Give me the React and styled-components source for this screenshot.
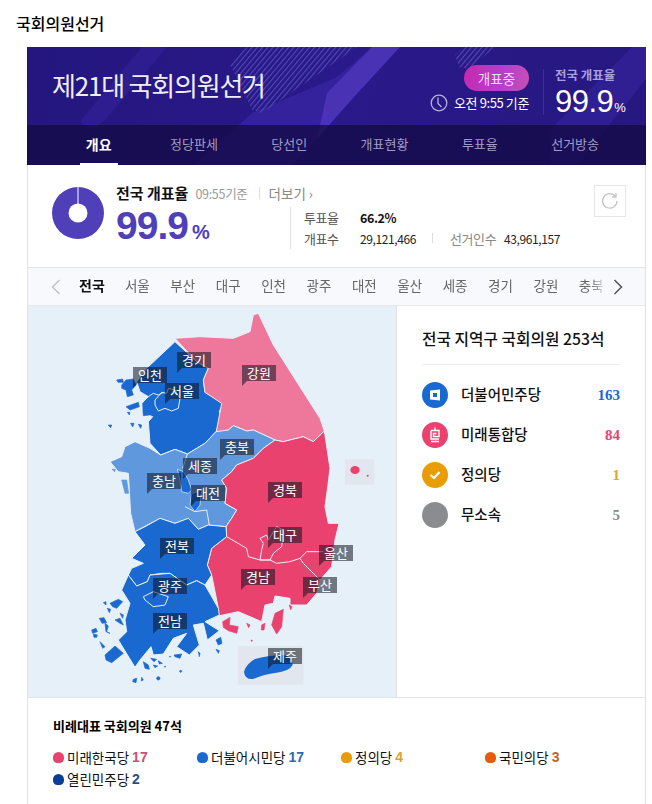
import React from "react";
import styled, { createGlobalStyle } from "styled-components";

const GlobalStyle = createGlobalStyle`
  * { box-sizing: border-box; }
  html, body { margin: 0; padding: 0; background: #fff; overflow: hidden; }
  body { font-family: "Noto Sans CJK KR", "Noto Sans", sans-serif; color: #111; }
`;

const NAV = ["개요", "정당판세", "당선인", "개표현황", "투표율", "선거방송"];
const CITIES = ["전국", "서울", "부산", "대구", "인천", "광주", "대전", "울산", "세종", "경기", "강원", "충북"];

const DISTRICT = [
  { name: "더불어민주당", seats: 163, color: "#1a69d0", mark: "square" },
  { name: "미래통합당", seats: 84, color: "#e9426f", mark: "glyph" },
  { name: "정의당", seats: 1, color: "#e89c05", mark: "check", count: "#e0a52e" },
  { name: "무소속", seats: 5, color: "#8b8c90" },
];

const PROPORTIONAL = [
  { name: "미래한국당", seats: 17, dot: "#e9426f", text: "#c9507a" },
  { name: "더불어시민당", seats: 17, dot: "#1a69d0", text: "#2a6cb0" },
  { name: "정의당", seats: 4, dot: "#e89c05", text: "#dfa02c" },
  { name: "국민의당", seats: 3, dot: "#e85a0a", text: "#c4622a" },
  { name: "열린민주당", seats: 2, dot: "#0a3f94", text: "#1f4f8f" },
];

const LABELS = [
  ["경기", 177, 352], ["인천", 133, 367], ["서울", 165, 383], ["강원", 242, 365],
  ["충북", 220, 439], ["세종", 183, 458], ["충남", 147, 473], ["대전", 191, 485],
  ["경북", 268, 482], ["대구", 268, 527], ["울산", 319, 545], ["부산", 303, 577],
  ["전북", 160, 538], ["경남", 241, 569], ["광주", 153, 578], ["전남", 153, 613],
  ["제주", 268, 648],
];

function PartyIcon({ mark }) {
  if (mark === "square") {
    return (
      <svg width="12" height="12" viewBox="0 0 12 12">
        <path d="M1 1.5 L11 0.5 V11.5 L1 10.5 Z" fill="#fff" />
        <rect x="4" y="4" width="4" height="4" fill="#1a69d0" />
      </svg>
    );
  }
  if (mark === "glyph") {
    return (
      <svg width="12" height="16" viewBox="0 0 12 16" fill="none" stroke="#fff" strokeWidth="1.4">
        <path d="M6 0.5 V3 M2 3.5 H10 V9.5 H4.5 V6.5 H7.5 M2 3.5 V12 H10 M2 14.5 H10" />
      </svg>
    );
  }
  if (mark === "check") {
    return (
      <svg width="14" height="12" viewBox="0 0 14 12" fill="none" stroke="#fff" strokeWidth="2.2">
        <path d="M2.5 6 L6 9 L11.5 3" />
      </svg>
    );
  }
  return null;
}

function Chevron({ dir, color }) {
  return (
    <svg width="10" height="16" viewBox="0 0 10 16" fill="none" stroke={color} strokeWidth="1.5">
      <path d={dir === "left" ? "M8.5 1 L1.5 8 L8.5 15" : "M1.5 1 L8.5 8 L1.5 15"} />
    </svg>
  );
}

function KoreaMap() {
  return (
    <MapSvg viewBox="-186 3 1104 1173">
      <g stroke="#e6f0f8" strokeWidth="3" strokeLinejoin="round">
        {/* 경기 */}
        <polygon fill="#1a69d0" points="255,110 320,170 355,190 340,225 345,262 400,292 388,320 393,340 378,380 345,415 292,447 255,433 212,450 180,415 175,350 188,335 158,325 160,290 175,275 150,260 140,230 170,190" />
        {/* 강원 */}
        <polygon fill="#ee789c" points="255,100 330,95 430,100 480,80 490,30 505,25 550,120 620,230 690,340 703,378 670,410 640,395 580,410 555,405 490,375 470,378 430,362 415,375 378,385 395,295 345,262 340,225 355,190 320,170" />
        {/* 충청 */}
        <polygon fill="#6098de" points="105,425 135,410 180,430 212,450 255,433 292,447 345,415 378,380 415,375 430,362 470,378 490,375 555,405 520,430 490,460 440,480 425,500 395,525 410,550 405,595 440,615 425,640 408,665 355,660 325,673 295,640 255,655 210,640 135,680 122,625 115,505 85,500 60,470 95,455" />
        {/* 경상 */}
        <polygon fill="#e9426f" points="555,405 580,410 640,395 670,410 703,378 720,490 712,555 705,605 715,655 747,655 735,705 725,785 690,825 680,865 650,900 600,900 600,880 555,873 550,895 525,900 515,950 445,920 385,933 385,910 365,810 352,780 365,730 410,695 408,665 425,640 440,615 405,595 410,550 395,525 425,500 440,480 490,460 520,430" />
        {/* 전북 */}
        <polygon fill="#1a69d0" points="135,680 165,665 210,640 255,655 295,640 325,673 355,660 408,665 410,695 365,730 352,780 365,810 345,840 320,827 290,840 240,805 215,805 180,810 172,830 140,843 115,810 125,790 160,775 125,760 165,720" />
        {/* 전남 */}
        <polygon fill="#1a69d0" points="115,810 140,843 172,830 180,810 240,805 290,840 320,827 345,840 385,910 388,930 345,950 388,977 352,1005 340,955 310,960 328,1020 298,1050 260,1025 290,985 250,1000 220,1047 190,1050 183,1025 150,1065 135,1087 85,1005 110,980 105,945 120,895 95,855" />
      </g>
      {/* 세종, 대전 */}
      <g fill="#1a69d0" stroke="#e6f0f8" strokeWidth="2">
        <polygon points="262,493 280,500 295,525 305,555 295,565 275,560 270,525" />
        <polygon points="305,565 335,555 330,600 315,620 300,600" />
      </g>
      {/* 시도 경계 */}
      <g fill="none" stroke="#e6f0f8" strokeWidth="3" strokeLinejoin="round">
        <polyline points="195,285 215,262 230,265 235,250 255,255 270,280 265,310 245,318 225,310 205,318 195,300 195,285" />
        <polyline points="145,265 175,275 190,265 205,270 220,262" />
        <polyline points="292,447 278,490" />
        <polyline points="285,605 315,620 350,615 358,660" />
        <polyline points="410,695 470,730 475,755 510,765 540,765 560,775 600,770 630,760 640,775 690,825" />
        <polyline points="630,760 650,740 700,740" />
        <polyline points="510,700 530,690 535,705 560,665 580,675 575,725 550,745 540,765 510,765 515,735 520,715 510,700" />
        <polyline points="160,875 190,860 235,875 225,900 190,905 165,885 160,875" />
      </g>
      {/* 섬 */}
      <g fill="#6098de" stroke="#6098de" strokeWidth="2" strokeLinejoin="round">
        <polygon points="95,525 110,525 116,565 105,565" />
        <polygon points="66,493 76,493 74,500" />
      </g>
      <g fill="#1a69d0" stroke="#1a69d0" strokeWidth="2" strokeLinejoin="round">
        <polygon points="80,225 98,222 100,232 84,232" />
        <polygon points="108,225 130,222 138,240 125,255 130,270 112,275 108,255 95,250 95,240" />
        <polygon points="108,305 145,292 148,305 120,315" />
        <polygon points="158,295 175,280 185,290 178,330 160,332" />
        <polygon points="112,322 120,322 118,330" />
        <polygon points="55,360 65,360 62,368" />
        <polygon points="122,355 132,355 128,366" />
        <polygon points="145,358 155,360 152,370" />
        <polygon points="60,895 85,883 98,890 80,910 68,905" />
        <polygon points="40,893 48,890 48,900" />
        <polygon points="52,910 62,913 58,923" />
        <polygon points="28,940 42,938 50,953 36,955" />
        <polygon points="90,925 100,930 98,940" />
        <polygon points="75,945 90,940 100,960 90,955" />
        <polygon points="45,955 55,963 50,980 60,985 48,980" />
        <polygon points="5,975 18,970 22,980 8,985" />
        <polygon points="10,987 22,990 20,997 12,997" />
        <polygon points="30,1010 45,1025 38,1030" />
        <polygon points="45,1050 75,1023 100,1045 65,1073 48,1065" />
        <polygon points="160,1070 175,1080 178,1093 165,1090" />
        <polygon points="182,1060 200,1063 192,1070" />
        <polygon points="190,1080 203,1083 195,1088" />
        <polygon points="205,1067 217,1075 208,1077" />
        <polygon points="252,1050 275,1047 270,1060 255,1055" />
        <polygon points="325,1040 330,1045 328,1055" />
        <polygon points="378,1005 392,997 396,1015 385,1020" />
        <polygon points="378,1033 388,1037 385,1045" />
        <polygon points="130,1123 140,1120 138,1133 128,1130" />
        <polygon points="155,1117 160,1125 154,1128" />
        <circle cx="272" cy="1099" r="3" />
        <circle cx="205" cy="1120" r="5" />
        <circle cx="225" cy="1085" r="1.5" />
        <circle cx="240" cy="1055" r="1.5" />
      </g>
      <g fill="#e9426f" stroke="#e9426f" strokeWidth="2" strokeLinejoin="round">
        <polygon points="398,950 420,937 418,960 445,965 440,985 415,977 400,967" />
        <polygon points="555,925 580,913 575,965 560,987 545,960" />
        <polygon points="470,955 480,960 476,968" />
        <polygon points="515,960 525,955 522,975 514,975" />
        <polygon points="598,900 606,905 602,915" />
        <circle cx="485" cy="1007" r="2" />
      </g>
      {/* 독도 */}
      <rect x="765" y="462" width="88" height="78" fill="#e2e6ee" />
      <ellipse cx="795" cy="495" rx="14" ry="12" fill="#e9426f" />
      <circle cx="833" cy="512" r="3" fill="#e9426f" />
      {/* 제주 */}
      <rect x="444" y="1023" width="196" height="117" fill="#e2e6ee" />
      <path fill="#1a69d0" d="M462 1100 Q470 1075 495 1062 Q540 1050 580 1050 Q608 1055 608 1080 Q598 1098 560 1103 Q520 1108 490 1122 Q465 1125 462 1100 Z" />
    </MapSvg>
  );
}

export default function App() {
  return (
    <>
      <GlobalStyle />
      <PageTitle>국회의원선거</PageTitle>
      <Card>
        <Hero>
          <HeroDecor viewBox="0 0 619 118">
            <defs>
              <pattern id="hatch" width="4" height="4" patternUnits="userSpaceOnUse" patternTransform="rotate(40)">
                <rect width="1.2" height="4" fill="#6a66d0" opacity="0.6" />
              </pattern>
            </defs>
            <path d="M55 72 L115 0 H140 L78 73 Q66 84 57 78 Q52 76 55 72 Z" fill="#35239a" opacity="0.55" />
            <path d="M167 118 L225 66 L310 30 L345 0 H373 L265 118 Z" fill="#34219c" />
            <path d="M300 46 L345 0 H373 L325 52 L290 92 Z" fill="#4a32b4" />
            <path d="M203 17 L220 0 H330 L235 66 L225 63 Z" fill="url(#hatch)" />
            <path d="M428 8 L436 0 H468 L442 22 L432 20 Z" fill="url(#hatch)" />
            <path d="M523 118 V92 Q523 84 530 76 L605 0 H619 V32 L550 118 Z" fill="#33229a" opacity="0.75" />
          </HeroDecor>
          <HeroTop>
            <HeroTitle>제21대 국회의원선거</HeroTitle>
            <HeroStatus>
              <Pill>개표중</Pill>
              <ClockRow>
                <svg width="18" height="18" viewBox="0 0 18 18" fill="none" stroke="#b5b1d8" strokeWidth="1.3">
                  <circle cx="9" cy="9" r="7.8" />
                  <path d="M8 3.5 V9.5 L11.5 13" />
                </svg>
                오전 9:55 기준
              </ClockRow>
            </HeroStatus>
            <HeroRate>
              <HeroRateLabel>전국 개표율</HeroRateLabel>
              <HeroRateValue>
                99.9<small>%</small>
              </HeroRateValue>
            </HeroRate>
          </HeroTop>
          <Nav>
            {NAV.map((item, i) => (
              <NavItem key={item} $active={i === 0}>
                <span>{item}</span>
              </NavItem>
            ))}
          </Nav>
        </Hero>

        <Summary>
          <Donut viewBox="0 0 52 52">
            <circle cx="26" cy="26" r="26" fill="#4f3fb8" />
            <circle cx="26" cy="26" r="9.5" fill="#fff" />
            <rect x="25.5" y="0" width="1" height="18" fill="#fff" />
          </Donut>
          <SummaryMain>
            <SummaryHead>
              <b>전국 개표율</b>
              <em>09:55기준</em>
              <More>더보기 ›</More>
            </SummaryHead>
            <BigRate>
              99.9<small>%</small>
            </BigRate>
          </SummaryMain>
          <Stats>
            <StatRow>
              <StatLabel>투표율</StatLabel>
              <strong>66.2%</strong>
            </StatRow>
            <StatRow>
              <StatLabel>개표수</StatLabel>
              <StatValue>29,121,466</StatValue>
              <Voters>
                <VotersLabel>선거인수</VotersLabel>43,961,157
              </Voters>
            </StatRow>
          </Stats>
          <Refresh>
            <svg width="18" height="18" viewBox="0 0 18 18" fill="none" stroke="#c4c4c4" strokeWidth="1.3">
              <path d="M14.5 4.5 A7.2 7.2 0 1 0 16 9" />
              <path d="M15 1 V5 H11" />
            </svg>
          </Refresh>
        </Summary>

        <Tabs>
          <Arrow>
            <Chevron dir="left" color="#c4c4c4" />
          </Arrow>
          <TabList>
            {CITIES.map((city, i) => (
              <Tab key={city} $active={i === 0}>
                {city}
              </Tab>
            ))}
          </TabList>
          <Arrow>
            <Chevron dir="right" color="#555" />
          </Arrow>
        </Tabs>

        <MapSection>
          <MapPane>
            <KoreaMap />
            {LABELS.map(([name, x, y]) => (
              <Pin key={name} $x={x - 28} $y={y - 306}>
                {name}
              </Pin>
            ))}
          </MapPane>
          <Seats>
            <SeatsTitle>전국 지역구 국회의원 253석</SeatsTitle>
            {DISTRICT.map((party) => (
              <SeatRow key={party.name}>
                <PartyBadge $color={party.color}>
                  <PartyIcon mark={party.mark} />
                </PartyBadge>
                <PartyName>{party.name}</PartyName>
                <SeatCount $color={party.count || party.color}>{party.seats}</SeatCount>
              </SeatRow>
            ))}
          </Seats>
        </MapSection>

        <Proportional>
          <ProportionalTitle>비례대표 국회의원 47석</ProportionalTitle>
          <Legend>
            {PROPORTIONAL.map((party) => (
              <LegendItem key={party.name}>
                <LegendDot $color={party.dot} />
                {party.name} <LegendCount $color={party.text}>{party.seats}</LegendCount>
              </LegendItem>
            ))}
          </Legend>
        </Proportional>
      </Card>
    </>
  );
}

const PageTitle = styled.h1`
  margin: 0;
  height: 47px;
  padding: 13px 0 0 16px;
  font-size: 16px;
  line-height: 20px;
  font-weight: 500;
  color: #000;
`;

const Card = styled.div`
  width: 619px;
  margin-left: 27px;
  border: solid #e2e2e2;
  border-width: 0 1px;
`;

const Hero = styled.header`
  position: relative;
  height: 118px;
  margin: 0 -1px;
  background: linear-gradient(100deg, #24167e 0%, #29198a 50%, #261880 100%);
  overflow: hidden;
  color: #fff;
`;

const HeroDecor = styled.svg`
  position: absolute;
  inset: 0;
  width: 100%;
  height: 100%;
`;

const HeroTop = styled.div`
  position: relative;
  display: flex;
  height: 78px;
  padding: 18px 0 0 25px;
`;

const HeroTitle = styled.div`
  flex: none;
  width: 333px;
  padding-top: 1px;
  font-size: 26px;
  line-height: 38px;
  letter-spacing: -1.2px;
  white-space: nowrap;
  color: #efedf9;
`;

const HeroStatus = styled.div`
  display: flex;
  flex-direction: column;
  align-items: flex-end;
  width: 144px;
  flex: none;
`;

const Pill = styled.div`
  width: 65px;
  height: 26px;
  border-radius: 13px;
  background: linear-gradient(100deg, #c728ac, #b53fd0 60%, #c850b0);
  text-align: center;
  font-size: 13.5px;
  line-height: 26px;
  color: #f6dcf2;
`;

const ClockRow = styled.div`
  display: flex;
  align-items: center;
  gap: 6px;
  margin-top: 3px;
  font-size: 13px;
  line-height: 18px;
  letter-spacing: -0.4px;
  white-space: nowrap;
`;

const HeroRate = styled.div`
  flex: none;
  margin-left: 14px;
  padding-left: 11px;
  height: 46px;
  margin-top: 4px;
  border-left: 1px solid #3f2fa0;
`;

const HeroRateLabel = styled.div`
  margin: -3px 0 2px;
  font-size: 12.5px;
  font-weight: 700;
  line-height: 18px;
  color: #a79fe0;
  white-space: nowrap;
`;

const HeroRateValue = styled.div`
  font-family: "Liberation Sans", sans-serif;
  font-size: 31px;
  line-height: 32px;
  letter-spacing: -0.5px;
  white-space: nowrap;
  small {
    font-size: 13px;
    margin-left: 1px;
  }
`;

const Nav = styled.nav`
  position: relative;
  display: flex;
  height: 40px;
  padding-left: 24px;
  background: rgba(20, 11, 68, 0.76);
`;

const NavItem = styled.div`
  flex: 0 0 95.3px;
  display: flex;
  justify-content: center;
  font-size: ${(p) => (p.$active ? "14px" : "13px")};
  color: ${(p) => (p.$active ? "#fff" : "#a09cc4")};
  font-weight: ${(p) => (p.$active ? 700 : 400)};
  span {
    width: ${(p) => (p.$active ? "38px" : "auto")};
    text-align: center;
    line-height: 38px;
    height: 40px;
    white-space: nowrap;
    border-bottom: 2px solid ${(p) => (p.$active ? "#fff" : "transparent")};
  }
`;

const Summary = styled.section`
  position: relative;
  display: flex;
  height: 102px;
  padding: 22px 0 0 24px;
`;

const Donut = styled.svg`
  flex: none;
  width: 52px;
  height: 52px;
`;

const SummaryMain = styled.div`
  flex: none;
  width: 174px;
  margin: -3px 0 0 12px;
`;

const SummaryHead = styled.div`
  display: flex;
  align-items: baseline;
  white-space: nowrap;
  line-height: 18px;
  b {
    font-size: 15px;
    font-weight: 700;
    color: #111;
  }
  em {
    font-style: normal;
    font-size: 12.5px;
    letter-spacing: -0.3px;
    color: #999;
    margin-left: 7px;
  }
`;

const More = styled.span`
  margin-left: 11px;
  padding-left: 9px;
  border-left: 1px solid #ddd;
  font-size: 13.5px;
  line-height: 12px;
  color: #888;
`;

const BigRate = styled.div`
  margin-top: 3px;
  font-family: "Liberation Sans", sans-serif;
  font-size: 39px;
  font-weight: 700;
  line-height: 40px;
  letter-spacing: -1px;
  color: #4f3fb8;
  small {
    font-size: 20px;
    font-weight: 700;
    margin-left: 4px;
  }
`;

const Stats = styled.div`
  flex: none;
  height: 42px;
  margin-top: 20px;
  padding-left: 13px;
  border-left: 1px solid #e2e2e2;
`;

const StatRow = styled.div`
  display: flex;
  align-items: center;
  height: 21px;
  font-size: 12px;
  letter-spacing: -0.4px;
  white-space: nowrap;
  strong {
    font-size: 12.5px;
    font-weight: 700;
  }
`;

const StatLabel = styled.span`
  display: inline-block;
  width: 56px;
  font-size: 13px;
  color: #555;
`;

const StatValue = styled.span`
  width: 72px;
  color: #222;
`;

const Voters = styled.span`
  display: flex;
  align-items: center;
  padding-left: 18px;
  position: relative;
  color: #222;
  &::before {
    content: "";
    position: absolute;
    left: 0;
    top: 4px;
    height: 10px;
    border-left: 1px solid #ddd;
  }
`;

const VotersLabel = styled.span`
  width: 54px;
  font-size: 13px;
  color: #888;
`;

const Refresh = styled.div`
  position: absolute;
  top: 20px;
  right: 19px;
  width: 32px;
  height: 32px;
  display: flex;
  align-items: center;
  justify-content: center;
  border: 1px solid #e6e6e6;
`;

const Tabs = styled.div`
  display: flex;
  align-items: center;
  height: 39px;
  padding-left: 18px;
  background: #f7f9fc;
  border-top: 1px solid #e4e4e4;
  border-bottom: 1px solid #e8e8e8;
`;

const Arrow = styled.div`
  flex: none;
  width: 20px;
  height: 16px;
  display: flex;
  justify-content: center;
`;

const TabList = styled.div`
  display: flex;
  flex: none;
  width: 541px;
  margin-right: 1px;
  padding-left: 3.3px;
  overflow: hidden;
  margin-top: -4px;
  mask-image: linear-gradient(to right, #000 97%, transparent);
`;

const Tab = styled.div`
  flex: 0 0 45.4px;
  text-align: center;
  font-size: ${(p) => (p.$active ? "14px" : "13.5px")};
  white-space: nowrap;
  color: ${(p) => (p.$active ? "#111" : "#666")};
  font-weight: ${(p) => (p.$active ? 700 : 400)};
`;

const MapSection = styled.section`
  display: flex;
  height: 392px;
  border-bottom: 1px solid #e4e4e4;
`;

const MapPane = styled.div`
  position: relative;
  flex: none;
  width: 369px;
  height: 100%;
  background: #e6f0f8;
  border-right: 1px solid #e2e2e2;
`;

const MapSvg = styled.svg`
  display: block;
  width: 368px;
  height: 391px;
`;

const Pin = styled.div`
  position: absolute;
  left: ${(p) => p.$x}px;
  top: ${(p) => p.$y}px;
  width: 34px;
  height: 16px;
  background: rgba(15, 20, 30, 0.55);
  color: #fff;
  font-size: 13px;
  line-height: 16px;
  text-align: center;
  &::after {
    content: "";
    position: absolute;
    left: 0;
    top: 16px;
    border-style: solid;
    border-width: 5px 5px 0 0;
    border-color: rgba(15, 20, 30, 0.55) transparent transparent transparent;
  }
`;

const Seats = styled.div`
  flex: 1;
  padding: 22px 25px 0 25px;
`;

const SeatsTitle = styled.div`
  height: 37px;
  margin-bottom: 10px;
  border-bottom: 1px solid #eee;
  font-size: 15.75px;
  font-weight: 500;
  line-height: 21px;
  white-space: nowrap;
`;

const SeatRow = styled.div`
  display: flex;
  align-items: center;
  height: 40px;
`;

const PartyBadge = styled.div`
  flex: none;
  display: flex;
  align-items: center;
  justify-content: center;
  width: 26px;
  height: 26px;
  border-radius: 50%;
  background: ${(p) => p.$color};
`;

const PartyName = styled.div`
  flex: 1;
  margin: -3px 0 0 13px;
  font-size: 14.5px;
  font-weight: 500;
`;

const SeatCount = styled.div`
  font-family: "Liberation Serif", serif;
  font-size: 15px;
  font-weight: 700;
  color: ${(p) => p.$color};
`;

const Proportional = styled.section`
  height: 110px;
  padding: 18px 0 0 25px;
`;

const ProportionalTitle = styled.div`
  font-size: 13px;
  font-weight: 700;
  line-height: 20px;
  color: #000;
`;

const Legend = styled.div`
  display: grid;
  grid-template-columns: repeat(4, 144px);
  grid-auto-rows: 22px;
  margin-top: 10px;
`;

const LegendItem = styled.div`
  display: flex;
  align-items: center;
  gap: 3px;
  font-size: 13.5px;
  white-space: nowrap;
`;

const LegendDot = styled.i`
  width: 11px;
  height: 11px;
  border-radius: 50% 50% 40% 40%;
  background: ${(p) => p.$color};
`;

const LegendCount = styled.b`
  font-family: "Liberation Sans", sans-serif;
  font-size: 14px;
  font-weight: 700;
  color: ${(p) => p.$color};
`;
